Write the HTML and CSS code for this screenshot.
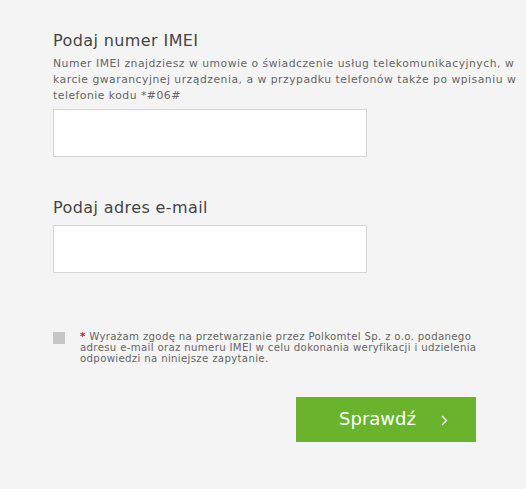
FILE: index.html
```html
<!DOCTYPE html>
<html lang="pl">
<head>
<meta charset="utf-8">
<link rel="stylesheet" href="styles.css">
</head>
<body>
<form class="form">
  <h2 class="title">Podaj numer IMEI</h2>
  <p class="hint">Numer IMEI znajdziesz w umowie o świadczenie usług telekomunikacyjnych, w karcie gwarancyjnej urządzenia, a w przypadku telefonów także po wpisaniu w telefonie kodu *#06#</p>
  <div class="field"></div>
  <h2 class="title title-email">Podaj adres e-mail</h2>
  <div class="field"></div>
  <div class="consent">
    <span class="box"></span>
    <p class="consent-text"><span class="req">*</span> Wyrażam zgodę na przetwarzanie przez Polkomtel Sp. z o.o. podanego adresu e-mail oraz numeru IMEI w celu dokonania weryfikacji i udzielenia odpowiedzi na niniejsze zapytanie.</p>
  </div>
  <div class="actions">
    <button type="button" class="btn">Sprawdź
      <svg class="chev" width="7" height="11" viewBox="0 0 7 11"><path d="M1 1 L5.5 5.5 L1 10" fill="none" stroke="#fff" stroke-width="1.4"/></svg>
    </button>
  </div>
</form>
</body>
</html>
```
FILE: styles.css
```css
html, body {
  margin: 0;
  background: #f4f4f4;
}
body {
  font-family: "DejaVu Sans", sans-serif;
  color: #555;
  width: 526px;
  height: 489px;
  overflow: hidden;
}
.form {
  padding: 31px 0 0 53px;
}
.title {
  margin: 0;
  font-size: 16px;
  letter-spacing: 0.4px;
  font-weight: normal;
  color: #444;
  line-height: 20px;
}
.hint {
  margin: 5px 0 0;
  font-size: 10.8px;
  letter-spacing: 0.5px;
  line-height: 16px;
  width: 468px;
  color: #666;
}
.field {
  width: 312px;
  height: 46px;
  background: #fff;
  border: 1px solid #d6d6d6;
  margin-top: 5px;
}
.title-email {
  margin-top: 41px;
}
.title-email + .field {
  margin-top: 7px;
}
.consent {
  display: flex;
  margin-top: 59px;
}
.box {
  width: 12px;
  height: 12px;
  background: #c6c6c6;
  flex: none;
  margin-top: 0;
}
.consent-text {
  margin: -1px 0 0 15px;
  font-size: 10.2px;
  letter-spacing: 0.32px;
  line-height: 11px;
  width: 420px;
  color: #666;
}
.req {
  color: #d0103a;
  font-weight: bold;
}
.actions {
  display: flex;
  justify-content: flex-end;
  width: 423px;
  margin-top: 33px;
}
.btn {
  width: 180px;
  height: 45px;
  background: #6ab42d;
  border: none;
  color: #fff;
  font-family: "DejaVu Sans", sans-serif;
  font-size: 18px;
  display: flex;
  align-items: center;
  justify-content: center;
  gap: 25px;
  padding: 0 0 2px 15px;
}
.chev {
  margin-top: 3px;
}
```
